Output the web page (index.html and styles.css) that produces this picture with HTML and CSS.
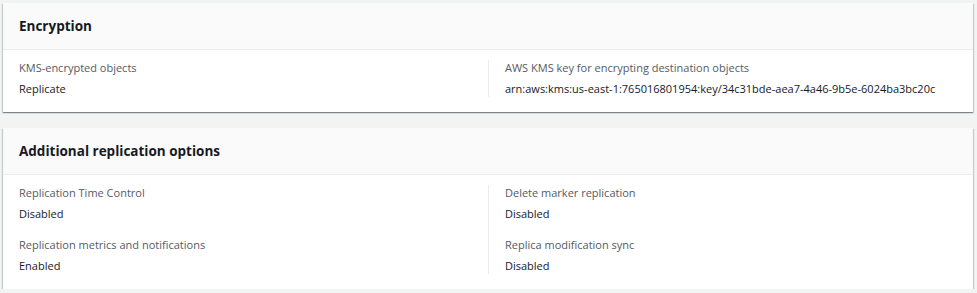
FILE: index.html
```html
<!DOCTYPE html>
<html lang="en">
<head>
<meta charset="utf-8">
<title>Replication details</title>
<link rel="stylesheet" href="styles.css">
</head>
<body>
<main class="page">
  <section class="card">
    <header class="card-header"><h2>Encryption</h2></header>
    <div class="card-body">
      <div class="col">
        <div class="item">
          <div class="label">KMS-encrypted objects</div>
          <div class="value">Replicate</div>
        </div>
      </div>
      <div class="col col-right">
        <div class="item">
          <div class="label">AWS KMS key for encrypting destination objects</div>
          <div class="value">arn:aws:kms:us-east-1:765016801954:key/34c31bde-aea7-4a46-9b5e-6024ba3bc20c</div>
        </div>
      </div>
    </div>
  </section>
  <section class="card">
    <header class="card-header"><h2>Additional replication options</h2></header>
    <div class="card-body">
      <div class="col">
        <div class="item">
          <div class="label">Replication Time Control</div>
          <div class="value">Disabled</div>
        </div>
        <div class="item">
          <div class="label">Replication metrics and notifications</div>
          <div class="value">Enabled</div>
        </div>
      </div>
      <div class="col col-right">
        <div class="item">
          <div class="label">Delete marker replication</div>
          <div class="value">Disabled</div>
        </div>
        <div class="item">
          <div class="label">Replica modification sync</div>
          <div class="value">Disabled</div>
        </div>
      </div>
    </div>
  </section>
</main>
</body>
</html>
```
FILE: styles.css
```css
html, body {
  margin: 0;
  padding: 0;
  background: #f2f3f3;
  font-family: "Open Sans", "Noto Sans", sans-serif;
  color: #16191f;
}
.page {
  padding: 3px 4px 0 3px;
  display: flex;
  flex-direction: column;
  gap: 16px;
}
.card {
  background: #fff;
  box-shadow: 0 1px 1px 0 rgba(0,28,36,0.3), 1px 1px 1px 0 rgba(0,28,36,0.15), -1px 1px 1px 0 rgba(0,28,36,0.15);
}
.card-header {
  background: #fafafa;
  height: 46px;
  padding: 0 16px;
  display: flex;
  align-items: center;
  border-bottom: 1px solid #eaeded;
}
.card-header h2 {
  margin: 0;
  font-size: 13.5px;
  font-weight: 700;
  color: #16191f;
}
.card-body {
  display: grid;
  grid-template-columns: 1fr 1fr;
  padding: 10px 0 15px;
}
.col {
  padding: 0 16px;
  display: flex;
  flex-direction: column;
  gap: 15px;
}
.col-right {
  border-left: 1px solid #eaeded;
}
.label {
  font-size: 11px;
  color: #545b64;
  line-height: 16px;
}
.value {
  font-size: 11px;
  color: #16191f;
  line-height: 16px;
  margin-top: 5px;
}
```
